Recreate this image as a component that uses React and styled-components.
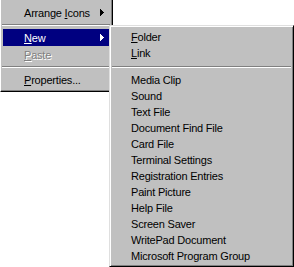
import React from 'react'
import styled, { createGlobalStyle } from 'styled-components'

const Global = createGlobalStyle`
  html, body {
    margin: 0;
    padding: 0;
    background: #fff;
  }
  body {
    font-family: "Liberation Sans", Arial, sans-serif;
    font-size: 11px;
  }
`

const subItems = [
  'Media Clip',
  'Sound',
  'Text File',
  'Document Find File',
  'Card File',
  'Terminal Settings',
  'Registration Entries',
  'Paint Picture',
  'Help File',
  'Screen Saver',
  'WritePad Document',
  'Microsoft Program Group',
]

const Arrow = ({ color }) => (
  <ArrowBox width="4" height="7" viewBox="0 0 4 7" shapeRendering="crispEdges">
    <rect x="0" y="0" width="1" height="7" fill={color} />
    <rect x="1" y="1" width="1" height="5" fill={color} />
    <rect x="2" y="2" width="1" height="3" fill={color} />
    <rect x="3" y="3" width="1" height="1" fill={color} />
  </ArrowBox>
)

const Label = ({ text, mnemonic }) => {
  if (mnemonic == null) return <span>{text}</span>
  return (
    <span>
      {text.slice(0, mnemonic)}
      <U>{text[mnemonic]}</U>
      {text.slice(mnemonic + 1)}
    </span>
  )
}

const App = () => {
  return (
    <Desk>
      <Global />
      <MainMenu>
        <Item>
          <Label text="Arrange Icons" mnemonic={8} />
          <Arrow color="#000" />
        </Item>
        <Separator />
        <Item active>
          <Label text="New" mnemonic={0} />
          <Arrow color="#fff" />
        </Item>
        <Item disabled>
          <Label text="Paste" mnemonic={0} />
        </Item>
        <Separator />
        <Item>
          <Label text="Properties..." mnemonic={0} />
        </Item>
      </MainMenu>

      <SubMenu>
        <SubItem>
          <Label text="Folder" mnemonic={0} />
        </SubItem>
        <SubItem>
          <Label text="Link" mnemonic={0} />
        </SubItem>
        <SubSeparator />
        {subItems.map((s) => (
          <SubItem key={s}>{s}</SubItem>
        ))}
      </SubMenu>
    </Desk>
  )
}

const Desk = styled.div`
  position: relative;
  width: 294px;
  height: 267px;
  overflow: hidden;
  background: #fff;
`

const MainMenu = styled.div`
  box-sizing: border-box;
  width: 113px;
  background: #c0c0c0;
  border-left: 1px solid #fff;
  border-right: 1px solid #000;
  border-bottom: 1px solid #000;
  box-shadow: inset -1px -1px 0 #808080;
  padding: 4px 3px 3px 2px;
  display: flex;
  flex-direction: column;
`

const Item = styled.div`
  height: 17px;
  display: flex;
  align-items: center;
  justify-content: space-between;
  padding: 0 5px 0 21px;
  color: ${(p) => (p.active ? '#fff' : p.disabled ? '#808080' : '#000')};
  background: ${(p) => (p.active ? '#000080' : 'transparent')};
  text-shadow: ${(p) => (p.disabled ? '1px 1px 0 #fff' : 'none')};
  letter-spacing: -0.2px;
  white-space: nowrap;
`

const Separator = styled.div`
  height: 8px;
  display: flex;
  flex-direction: column;
  justify-content: center;
  margin: 0 -1px;
  &::before {
    content: '';
    height: 1px;
    background: #808080;
  }
  &::after {
    content: '';
    height: 1px;
    background: #fff;
  }
`

const SubMenu = styled.div`
  position: absolute;
  left: 109px;
  top: 25px;
  box-sizing: border-box;
  width: 185px;
  height: 242px;
  background: #c0c0c0;
  border-top: 1px solid #dfdfdf;
  border-left: 1px solid #dfdfdf;
  border-right: 1px solid #000;
  border-bottom: 1px solid #000;
  box-shadow: inset 1px 1px 0 #fff, inset -1px -1px 0 #808080;
  padding: 3px 3px 0 3px;
  display: flex;
  flex-direction: column;
`

const SubItem = styled.div`
  height: 16px;
  display: flex;
  align-items: center;
  padding-left: 18px;
  color: #000;
  letter-spacing: -0.2px;
  white-space: nowrap;
`

const SubSeparator = styled(Separator)`
  height: 11px;
`

const U = styled.span`
  text-decoration: underline;
  text-underline-offset: 1px;
`

const ArrowBox = styled.svg`
  display: block;
  flex: none;
`

export default App
